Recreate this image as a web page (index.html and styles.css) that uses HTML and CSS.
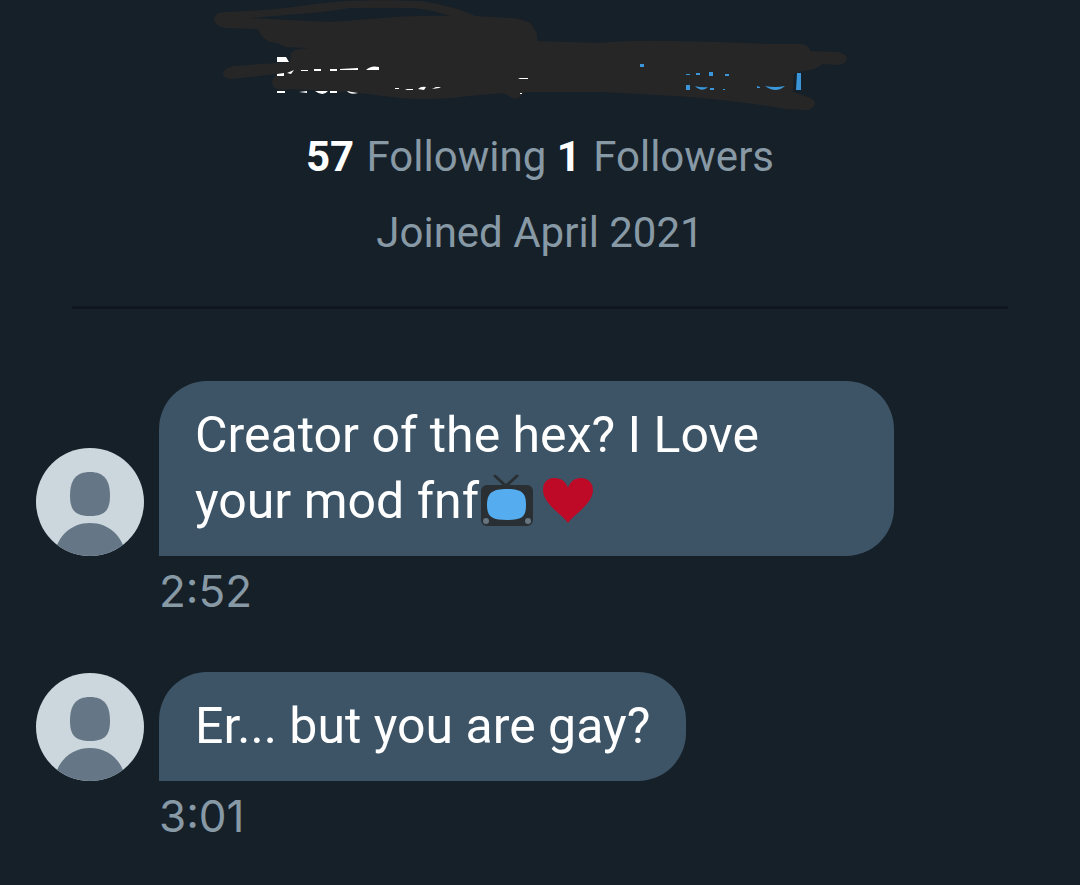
FILE: index.html
```html
<!DOCTYPE html>
<html lang="en">
<head>
<meta charset="utf-8">
<meta name="viewport" content="width=device-width, initial-scale=1">
<title>Messages</title>
<link rel="stylesheet" href="styles.css">
</head>
<body>
<svg class="symbols" aria-hidden="true">
  <symbol id="person" viewBox="0 0 108 108">
    <rect width="108" height="108" fill="#ccd6dd"/>
    <path d="M54 24c-14 0-20 8-20 24 0 14 5 20 20 20s20-6 20-20c0-16-6-24-20-24Z" fill="#657786"/>
    <path d="M18 108c3-20 17-33 36-33s33 13 36 33Z" fill="#657786"/>
  </symbol>
</svg>
<main class="page">
  <header class="profile">
    <svg class="scribble" viewBox="200 0 680 118" aria-hidden="true">
      <path fill="#262626" fill-rule="evenodd" d="M214 19Q215 12 225 12C260 11 290 8 315 4C350-1 390 0 420 1Q455 6 475 16L510 18Q533 20 534 29Q538 32 537 41L600 43Q630 40 670 41L720 42L770 44L803 44Q810 46 810 51L838 52Q847 54 847 59Q845 65 836 65L822 64Q817 70 803 71L794 74L793 92L808 97Q816 100 815 104Q813 111 803 110L785 109Q740 101 690 97Q640 94 600 92L525 92L518 98Q514 100 509 96L503 93L470 96Q435 101 400 98L350 92L290 89Q273 92 272 83Q273 76 278 74L232 79Q223 79 223 73Q224 68 234 66L290 62L291 53Q293 49 310 48L285 47Q281 43 270 42Q261 38 258 29L225 28Q215 26 214 19ZM250 18L330 22L370 19Q410 15 450 16Q430 9 412 8L350 8Q320 13 285 15Z"/>
      <g fill="#fff">
        <path d="M277 57h9l3 5h-12ZM277 74l7-1v3h-7ZM277 91h8v2h-8ZM287 73l7-3-3 4ZM301 70h7v1h-7ZM314 69l7 0v2h-7ZM330 69l7 0v2h-7ZM340 69l18-1v2l-18 0ZM366 70q5-5 13-3v3ZM299 92l8-1v2ZM315 91h13q-5 6-13 0ZM330 91h7v2h-7ZM347 91q4 1 11 2-8 2-11-2ZM395 88h4v1h-4ZM405 89h8v1h-6ZM418 89q3-3 8-2l-2 3ZM432 89l4-2 5 0-2 1ZM518 78l10 0v1h-8ZM520 93h2v1h-2Z"/>
      </g>
      <g fill="#3a96d8">
        <path d="M640 64h4v3h-4ZM686 74h4v1h-4ZM696 73h4v2h-4ZM709 72h4v4h-4ZM725 74h4v2h-4ZM686 85h4v5h-4ZM695 86q6 2 13 1-6 6-13-1ZM710 88l4 0v2h-4ZM723 89h2v1h-2ZM757 86l3 1v1h-3ZM765 86q10 2 20 0-9 8-20 0ZM797 73h4v17h-5Z"/>
      </g>
    </svg>
    <p class="stats"><a class="stat" href="#"><strong>57</strong> Following</a> <a class="stat" href="#"><strong>1</strong> Followers</a></p>
    <p class="stats">Joined April 2021</p>
  </header>
  <hr class="rule">
  <section class="thread">
    <article class="message">
      <svg class="avatar" aria-hidden="true"><use href="#person"/></svg>
      <p class="bubble">Creator of the hex? I Love your mod fnf<svg class="emoji" viewBox="3 0 60 54" role="img" aria-label="Television"><path d="M18 3L29 13L40 3" fill="none" stroke="#292f33" stroke-width="3" stroke-linecap="round"/><rect x="4" y="12" width="52" height="41" rx="6" fill="#292f33"/><path d="M30 16c15 0 19 4 19 16s-4 15-19 15-20-3-20-15 5-16 20-16Z" fill="#55acee"/><circle cx="9" cy="48" r="3" fill="#66757f"/><circle cx="51" cy="48" r="3" fill="#66757f"/></svg><svg class="emoji" viewBox="5 0 60 54" role="img" aria-label="Heart"><path d="M31 50C26 42 6 31 6 17C6 8 12 5 17 5C25 5 29 9 31 15C33 9 37 5 44 5C50 5 56 9 56 17C56 31 36 42 31 50Z" fill="#be0a26"/></svg></p>
      <time class="time">2:52</time>
    </article>
    <article class="message">
      <svg class="avatar" aria-hidden="true"><use href="#person"/></svg>
      <p class="bubble">Er... but you are gay?</p>
      <time class="time">3:01</time>
    </article>
  </section>
</main>
</body>
</html>
```
FILE: styles.css
```css
* { box-sizing: border-box; }
body {
  margin: 0;
  background: #162029;
  color: #8899a6;
  font-family: Roboto, "Liberation Sans", sans-serif;
  font-size: 42px;
}
.symbols { display: none; }
.page { padding: 0 36px 36px; }
.profile {
  display: flex;
  flex-direction: column;
  align-items: center;
}
.scribble { display: block; width: 680px; max-width: 100%; height: 118px; }
.stats { margin: 0; line-height: 78px; }
.stats + .stats { line-height: 74px; }
.stat { color: inherit; text-decoration: none; }
.stat strong { color: #fff; margin-right: 2px; }
.rule {
  height: 3px;
  margin: 36px 36px 72px;
  border: 0;
  background: #10161e;
}
.thread { display: grid; gap: 50px; }
.message {
  display: grid;
  grid-template-columns: 108px 1fr;
  column-gap: 15px;
  align-items: end;
}
.avatar { width: 108px; height: 108px; border-radius: 50%; }
.bubble {
  justify-self: start;
  max-width: 83%;
  margin: 0;
  padding: 21px 36px 22px;
  border-radius: 48px 48px 48px 0;
  background: #3d5466;
  color: #fff;
  font-size: 50px;
  line-height: 66px;
}
.emoji {
  width: 62px;
  height: 54px;
  margin: -6px 0;
  overflow: visible;
  vertical-align: -3px;
}
.time {
  grid-column: 2;
  padding-top: 4px;
  font-family: Inter, Roboto, sans-serif;
  font-size: 44px;
  line-height: 62px;
}
```
